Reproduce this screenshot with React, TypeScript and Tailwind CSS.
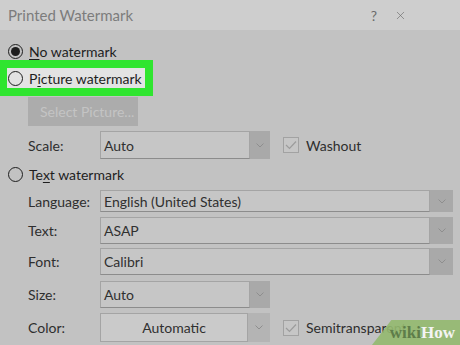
import { X } from 'lucide-react'

const font = { fontFamily: 'Lato, "Noto Sans", sans-serif' }

function Chevron({ className = '' }: { className?: string }) {
  return (
    <svg width="8" height="5" viewBox="0 0 8 5" className={className}>
      <path d="M0.5 0.5 L4 4 L7.5 0.5" fill="none" stroke="#8e8e8e" strokeWidth="1" />
    </svg>
  )
}

function Radio({ checked = false }: { checked?: boolean }) {
  return (
    <span className="flex h-[15px] w-[15px] items-center justify-center rounded-full border border-[#1e1e1e] bg-transparent">
      {checked && <span className="h-[9px] w-[9px] rounded-full bg-[#1e1e1e]" />}
    </span>
  )
}

function Check() {
  return (
    <span className="flex h-[16px] w-[16px] items-center justify-center border border-[#a2a2a2] bg-[#c6c6c6]">
      <svg width="12" height="10" viewBox="0 0 12 10">
        <path d="M1 5 L4.5 8.5 L11 1.5" fill="none" stroke="#9c9c9c" strokeWidth="1.2" />
      </svg>
    </span>
  )
}

function Combo({ value, width, btn = 20 }: { value: string; width: number; btn?: number }) {
  return (
    <div className="flex h-full" style={{ width }}>
      <div className="flex flex-1 items-center border border-[#a4a4a4] border-b-[#8c8c8c] bg-[#c6c6c6] pl-[3px] text-[#303030]">
        {value}
      </div>
      <div className="flex items-center justify-center bg-[#a9a9a9]" style={{ width: btn }}>
        <Chevron />
      </div>
    </div>
  )
}

function Row({ label, children, className = '' }: { label: string; children: React.ReactNode; className?: string }) {
  return (
    <div className={`flex items-center ${className}`}>
      <span className="ml-[28px] w-[72px] text-[#2e2e2e]">{label}</span>
      {children}
    </div>
  )
}

export default function App() {
  return (
    <div className="relative h-[345px] w-[460px] overflow-hidden bg-[#c2c2c2] text-[14px]" style={font}>
      <div className="flex h-[30px] items-center justify-between bg-[#cecece] pl-[8px] pr-[53px]">
        <span className="text-[15px] text-[#7c7c7c]">Printed Watermark</span>
        <div className="flex items-center gap-[17px] text-[#6a6a6a]">
          <span className="text-[14px]">?</span>
          <X size={13} strokeWidth={1.2} />
        </div>
      </div>

      <div className="mt-[12px] flex h-[18px] items-center pl-[8px] text-[#1e1e1e]">
        <Radio checked />
        <span className="ml-[6px]">
          <span className="underline underline-offset-2">N</span>o watermark
        </span>
      </div>

      <div className="h-[36px] w-[153px] bg-[#2fe52f] pl-[7px] pt-[8px]">
        <div className="flex h-[20px] w-[138px] items-center bg-[#e3e3e3] pl-[1px] text-[#1e1e1e]">
          <Radio />
          <span className="ml-[6px]">
            P<span className="underline underline-offset-2">i</span>cture watermark
          </span>
        </div>
      </div>

      <div className="ml-[28px] mt-[1px] flex h-[29px] w-[110px] items-center bg-[#acacac] pl-[12px] text-[#c4c4c4]">
        Select Picture...
      </div>

      <Row label="Scale:" className="mt-[5px] h-[28px]">
        <Combo value="Auto" width={170} />
        <div className="ml-[13px] flex items-center">
          <Check />
          <span className="ml-[7px] text-[#2e2e2e]">Washout</span>
        </div>
      </Row>

      <div className="mt-[7px] flex h-[16px] items-center pl-[8px] text-[#1e1e1e]">
        <Radio />
        <span className="ml-[6px]">
          Te<span className="underline underline-offset-2">x</span>t watermark
        </span>
      </div>

      <Row label="Language:" className="mt-[8px] h-[22px]">
        <Combo value="English (United States)" width={353} btn={23} />
      </Row>
      <Row label="Text:" className="mt-[5px] h-[27px]">
        <Combo value="ASAP" width={353} btn={23} />
      </Row>
      <Row label="Font:" className="mt-[4px] h-[27px]">
        <Combo value="Calibri" width={353} btn={23} />
      </Row>
      <Row label="Size:" className="mt-[6px] h-[27px]">
        <Combo value="Auto" width={170} />
      </Row>
      <Row label="Color:" className="mt-[5px] h-[29px]">
        <div className="flex h-full w-[170px]">
          <div className="flex flex-1 items-center justify-center border border-[#a4a4a4] bg-[#cacaca] text-[#303030]">
            Automatic
          </div>
          <div className="flex w-[22px] items-center justify-center bg-[#b4b4b4]">
            <Chevron />
          </div>
        </div>
        <div className="ml-[13px] flex items-center">
          <Check />
          <span className="ml-[7px] text-[#2e2e2e]">Semitransparent</span>
        </div>
      </Row>

      <div className="absolute bottom-0 right-0 flex h-[25px] w-[88px] items-center justify-end bg-[#93b96f]/90 pr-[5px] [clip-path:polygon(22%_0,100%_0,100%_100%,0_100%)]">
        <span className="text-[17px] font-bold leading-none" style={{ fontFamily: '"Liberation Serif", serif' }}>
          <span className="text-[#5e7d4a]">wiki</span>
          <span className="text-[#f4f4f4]">How</span>
        </span>
      </div>
    </div>
  )
}
